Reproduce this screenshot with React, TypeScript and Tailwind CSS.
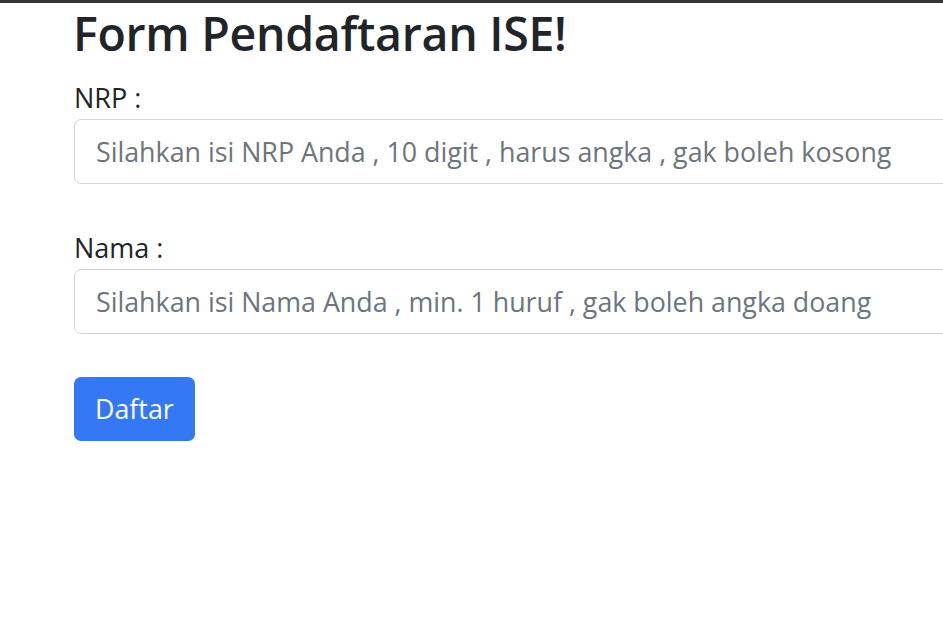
import React from "react";

export default function App() {
  return (
    <div className="min-h-[622px] w-[943px] overflow-hidden bg-white" style={{ fontFamily: '"Open Sans", sans-serif' }}>
      <div className="h-[3px] bg-[#363636]" />
      <div className="pl-[74px] pt-[3px]">
        <h1 className="m-0 -ml-[1px] text-[46.5px] font-semibold leading-[1.2] text-[#212529] tracking-[-0.3px]">Form Pendaftaran ISE!</h1>
        <div className="mt-[15px] w-[1000px]">
          <label className="block text-[27px] leading-[42px] text-[#212529]">NRP :</label>
          <input
            className="block h-[65px] w-full rounded-[7px] border border-[#ced4da] px-[21px] text-[26.8px] text-[#212529] outline-none placeholder:text-[#6c757d]"
            placeholder="Silahkan isi NRP Anda , 10 digit , harus angka , gak boleh kosong"
          />
          <label className="mt-[43px] block text-[27px] leading-[42px] text-[#212529]">Nama :</label>
          <input
            className="block h-[65px] w-full rounded-[7px] border border-[#ced4da] px-[21px] text-[26.8px] text-[#212529] outline-none placeholder:text-[#6c757d]"
            placeholder="Silahkan isi Nama Anda , min. 1 huruf , gak boleh angka doang"
          />
          <button className="mt-[43px] h-[64px] rounded-[7px] bg-[#3478f6] px-[21px] text-[26.8px] text-white">Daftar</button>
        </div>
      </div>
    </div>
  );
}
